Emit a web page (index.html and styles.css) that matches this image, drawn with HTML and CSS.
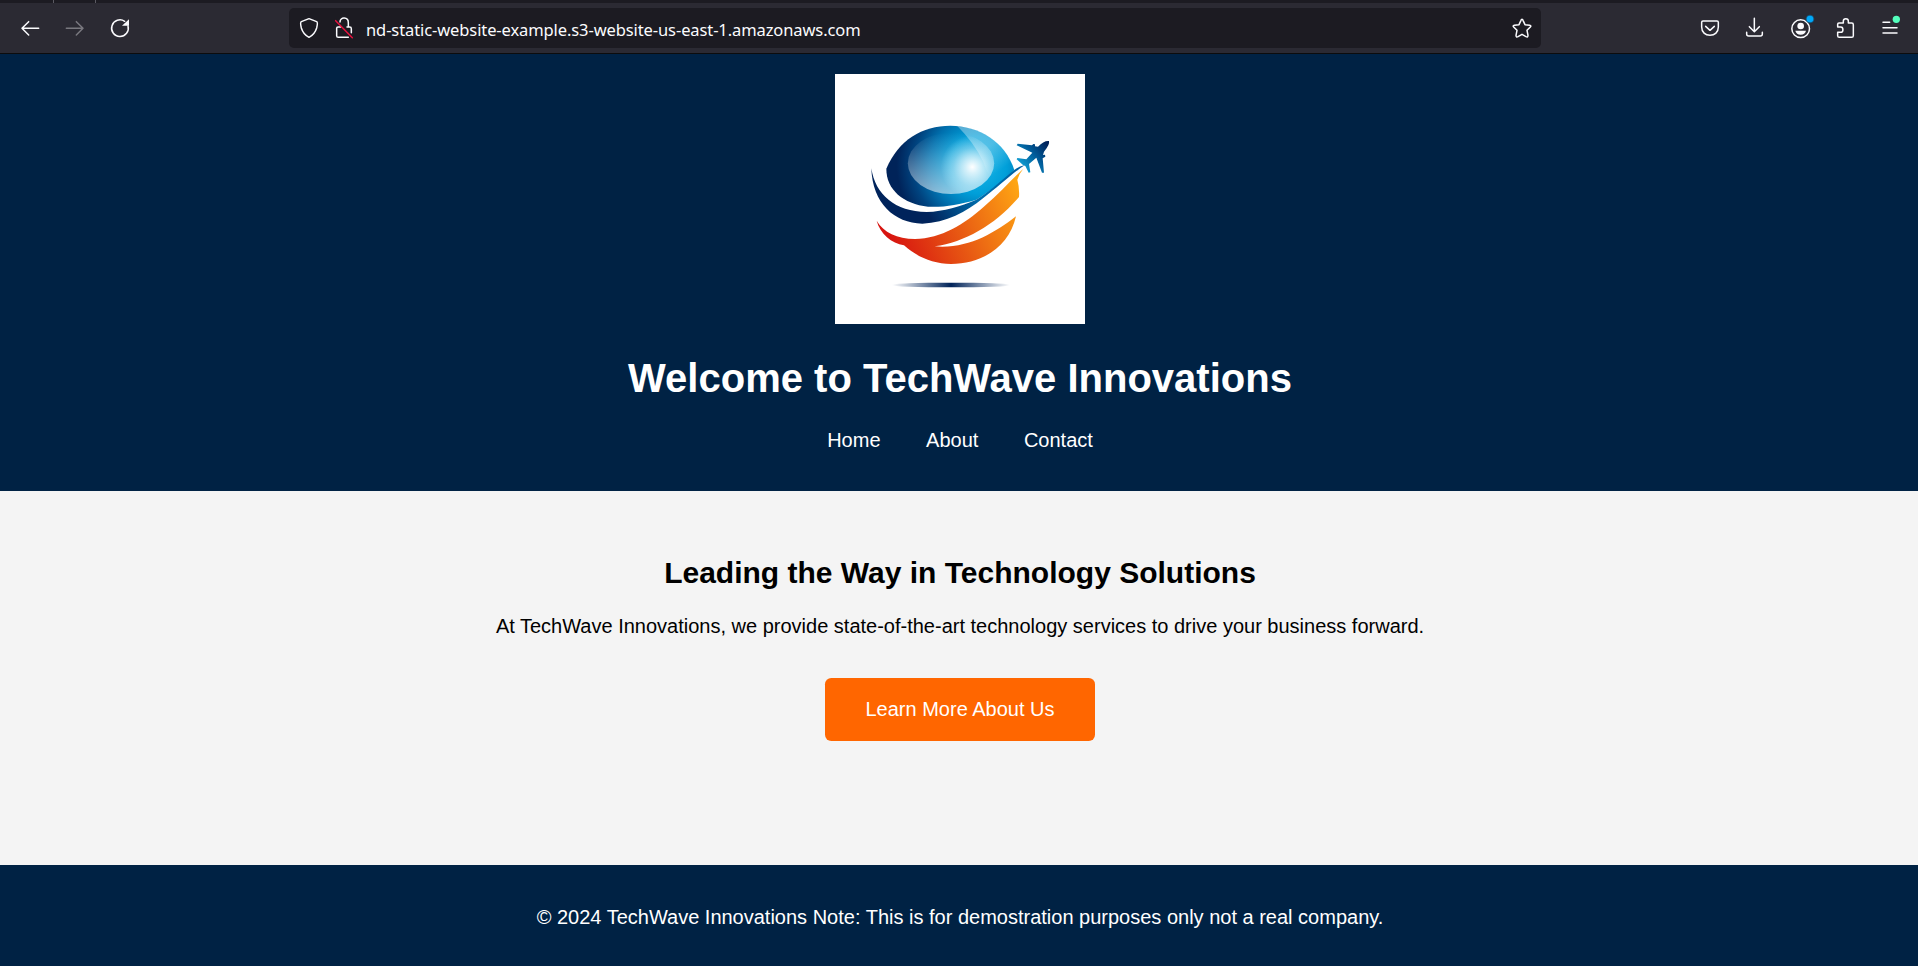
FILE: index.html
```html
<!DOCTYPE html>
<html lang="en">
<head>
<meta charset="utf-8">
<title>TechWave Innovations</title>
<link rel="stylesheet" href="styles.css">
</head>
<body>
<div class="tabstrip"><span class="tab-edge"></span><span class="tab-edge"></span></div>
<div class="toolbar">
  <div class="tools">
    <svg class="icon" viewBox="54 48 72 72"><path d="M116 85H67M86 65L66 85L86 105"/></svg>
    <svg class="icon icon-off" viewBox="189 48 72 72"><path d="M199 85H248M229 65L249 85L229 105"/></svg>
    <svg class="icon" viewBox="324 48 72 72"><path d="M384 78A25 25 0 1 1 374 64"/><path class="solid" d="M387 58V77H366Z"/></svg>
  </div>
  <div class="urlbar">
    <svg class="icon" viewBox="891 48 72 72"><path d="M927 56L950 65C954 67 952 76 950 84C946 97 937 107 927 112C917 107 908 97 904 84C902 76 900 67 904 65Z"/></svg>
    <svg class="icon" viewBox="996 48 72 72"><path d="M1020 66C1020 50 1045 50 1045 68V79M1014 81Q1010 81 1010 85V107Q1010 112 1015 112H1045M1014 81H1022M1041 81H1049Q1054 81 1054 86V98"/><path class="strike" d="M1007 62L1057 113"/></svg>
    <span class="url">nd-static-website-example.s3-website-us-east-1.amazonaws.com</span>
    <svg class="icon" viewBox="90 48 72 72"><path d="M126 58Q128 58 129 61L135 74L149 76Q155 77 151 81L141 91L144 106Q144 113 138 110L126 103L114 110Q108 113 108 106L111 91L101 81Q97 77 103 76L117 74L123 61Q124 58 126 58Z"/></svg>
  </div>
  <div class="tools">
    <svg class="icon" viewBox="654 48 72 72"><path d="M669 63H711Q715 63 715 67V81C715 97 704 106 690 106C676 106 665 97 665 81V67Q665 63 669 63ZM677 79L690 91L703 79"/></svg>
    <svg class="icon" viewBox="789 48 72 72"><path d="M823 55V94M808 80L823 95L838 80M800 97V102Q800 108 806 108H841Q847 108 847 102V97"/></svg>
    <svg class="icon" viewBox="924 48 72 72"><circle cx="962" cy="86" r="26.5"/><circle class="solid" cx="962" cy="78" r="10"/><path class="solid" d="M946 92H978Q975 104 962 104Q949 104 946 92Z"/><circle class="halo" cx="990" cy="57" r="13"/><circle class="dot-blue" cx="990" cy="57" r="10"/></svg>
    <svg class="icon" viewBox="1059 48 72 72"><path d="M1073 80V73Q1073 69 1077 69H1090V63C1090 54 1105 54 1105 63V69H1115Q1120 69 1120 74V107Q1120 112 1115 112H1078Q1073 112 1073 107V97H1082C1091 97 1091 81 1082 81H1073"/></svg>
    <svg class="icon" viewBox="1194 48 72 72"><path d="M1209 67H1229M1209 83H1251M1209 99H1251"/><circle class="dot-green" cx="1249" cy="58" r="11"/></svg>
  </div>
</div>

<header class="site-header">
  <svg class="logo" viewBox="30 27 750 750">
    <defs>
      <radialGradient id="globe" gradientUnits="userSpaceOnUse" cx="460" cy="300" r="245">
        <stop offset="0" stop-color="#1ab6e8"/><stop offset=".35" stop-color="#009fd9"/><stop offset=".6" stop-color="#0070ae"/><stop offset=".8" stop-color="#00437f"/><stop offset="1" stop-color="#002359"/>
      </radialGradient>
      <linearGradient id="lens" x1="0" y1="0" x2="0" y2="1">
        <stop offset="0" stop-color="#fff" stop-opacity="0"/><stop offset=".25" stop-color="#fff" stop-opacity=".12"/><stop offset="1" stop-color="#fff" stop-opacity=".55"/>
      </linearGradient>
      <radialGradient id="glow" gradientUnits="userSpaceOnUse" cx="442" cy="306" r="95">
        <stop offset="0" stop-color="#fff"/><stop offset=".2" stop-color="#fff" stop-opacity=".75"/><stop offset=".6" stop-color="#fff" stop-opacity=".3"/><stop offset="1" stop-color="#fff" stop-opacity="0"/>
      </radialGradient>
      <linearGradient id="swoosh" gradientUnits="userSpaceOnUse" x1="310" y1="450" x2="590" y2="310">
        <stop offset="0" stop-color="#00235b"/><stop offset=".5" stop-color="#006ead"/><stop offset="1" stop-color="#0060a0"/>
      </linearGradient>
      <linearGradient id="flame" gradientUnits="userSpaceOnUse" x1="200" y1="540" x2="590" y2="370">
        <stop offset="0" stop-color="#d71410"/><stop offset=".5" stop-color="#e95d13"/><stop offset="1" stop-color="#ffa813"/>
      </linearGradient>
      <linearGradient id="plane" gradientUnits="userSpaceOnUse" x1="590" y1="300" x2="665" y2="235">
        <stop offset="0" stop-color="#0e9bd0"/><stop offset=".5" stop-color="#005b99"/><stop offset="1" stop-color="#00235b"/>
      </linearGradient>
      <linearGradient id="shine" gradientUnits="userSpaceOnUse" x1="430" y1="190" x2="520" y2="320">
        <stop offset="0" stop-color="#fff" stop-opacity=".35"/><stop offset=".5" stop-color="#fff" stop-opacity=".3"/><stop offset="1" stop-color="#fff" stop-opacity="0"/>
      </linearGradient>
      <linearGradient id="shadow">
        <stop offset="0" stop-color="#002359" stop-opacity="0"/><stop offset=".5" stop-color="#002359"/><stop offset="1" stop-color="#002359" stop-opacity="0"/>
      </linearGradient>
    </defs>
    <path class="paper" d="M30 27H780V777H30Z"/>
    <path fill="url(#globe)" d="M184 311C220 225 292 182 376 182C462 182 540 229 568 315C535 347 502 374 454 404C400 420 357 427 309 425C235 416 184 375 184 311Z"/>
    <ellipse fill="url(#lens)" cx="378" cy="295" rx="129.500" ry="92"/>
    <ellipse fill="url(#glow)" cx="378" cy="295" rx="129.500" ry="92"/>
    <path fill="url(#shine)" d="M397 183C473 189 544 232 568 315L545 336C515 375 486 327 475 290Q446 232 397 183Z"/>
    <path fill="url(#swoosh)" d="M139 310C151 389 210 440 305 441C357 439 405 424 454 404C504 373 543 332 572 312Q583 304 600 300C558 327 521 365 474 400C424 440 364 474 292 476C208 475 142 414 139 310Z"/>
    <path fill="url(#flame)" d="M155 467C176 502 216 522 270 522C350 520 416 479 479 423C524 384 561 342 595 311Q582 326 577 344Q584 370 582 396C507 482 421 530 329 544C429 552 506 506 573 454C553 545 471 597 378 597C322 596 273 574 237 541C200 535 165 506 155 467Z"/>
    <path fill="url(#plane)" d="M672 228Q675 239 657 260L654 270L660 269L661 275L653 280L657 323L651 323L634 278L612 297L616 322L611 323L601 303L593 299L575 283L577 279L604 283L622 263L575 241L578 236L621 241L625 237L630 238L630 244L639 245Q657 226 672 228Z"/>
    <ellipse fill="url(#shadow)" cx="378" cy="660" rx="177" ry="7"/>
  </svg>
  <h1 class="title">Welcome to TechWave Innovations</h1>
  <nav class="nav"><a class="nav-link">Home</a> <a class="nav-link">About</a> <a class="nav-link">Contact</a></nav>
</header>

<main class="hero">
  <h2 class="subtitle">Leading the Way in Technology Solutions</h2>
  <p class="lead">At TechWave Innovations, we provide state-of-the-art technology services to drive your business forward.</p>
  <a class="button">Learn More About Us</a>
</main>

<footer class="site-footer">
  <p class="copyright">© 2024 TechWave Innovations Note: This is for demostration purposes only not a real company.</p>
</footer>
</body>
</html>
```
FILE: styles.css
```css
* { box-sizing: border-box; }
body {
  margin: 0;
  height: 966px;
  overflow: hidden;
  display: flex;
  flex-direction: column;
  font: 20px/23px "Liberation Sans", Arial, sans-serif;
  background: #f4f4f4;
  color: #000;
}
.tabstrip {
  flex: none;
  height: 3px;
  background: #1c1b22;
  display: flex;
  gap: 41px;
  padding-left: 53px;
}
.tab-edge { width: 1px; background: #5b5a62; }
.toolbar {
  flex: none;
  height: 51px;
  padding: 0 16px 0 18px;
  display: flex;
  align-items: center;
  justify-content: space-between;
  background: #2b2a33;
  border-bottom: 1px solid #0c0c0d;
}
.tools { display: flex; gap: 21px; }
.icon {
  flex: none;
  width: 24px;
  height: 24px;
  overflow: visible;
  fill: none;
  stroke: #fbfbfe;
  stroke-width: 4.5;
  stroke-linecap: round;
  stroke-linejoin: round;
}
.icon-off { stroke: #79787f; }
.solid { fill: #fbfbfe; stroke: none; }
.icon .strike { stroke: #e8123f; }
.halo { fill: #16547a; stroke: none; }
.dot-blue { fill: #00a8f8; stroke: none; }
.dot-green { fill: #54ffbd; stroke: none; }
.urlbar {
  width: 1252px;
  height: 40px;
  padding: 0 7px 0 8px;
  display: flex;
  align-items: center;
  gap: 11px;
  border-radius: 5px;
  background: #1c1b22;
}
.url {
  flex: 1;
  margin-left: -1px;
  padding-top: 3px;
  font: 16.5px/24px "Noto Sans", sans-serif;
  letter-spacing: -0.1px;
  color: #fbfbfe;
  white-space: nowrap;
}
.site-header {
  flex: none;
  height: 437px;
  padding: 20px 0 0 2px;
  display: flex;
  flex-direction: column;
  align-items: center;
  background: #002244;
  color: #fff;
}
.logo { flex: none; width: 250px; height: 250px; }
.paper { fill: #fff; }
.title { margin: 31px 0 0; font-size: 40px; line-height: 46px; }
.nav { margin-top: 28px; }
.nav-link { display: inline-block; margin: 0 20px; }
.hero {
  flex: none;
  height: 374px;
  padding: 65px 0 0 2px;
  display: flex;
  flex-direction: column;
  align-items: center;
}
.subtitle { margin: 0; font-size: 30px; line-height: 34px; }
.lead { margin: 25px 0 0; }
.button {
  margin-top: 40px;
  width: 270px;
  height: 63px;
  line-height: 63px;
  text-align: center;
  border-radius: 6.25px;
  background: #ff6600;
  color: #fff;
}
.site-footer {
  flex: 1;
  padding: 41px 0 0 2px;
  text-align: center;
  background: #002244;
  color: #fff;
}
.copyright { margin: 0; }
```
